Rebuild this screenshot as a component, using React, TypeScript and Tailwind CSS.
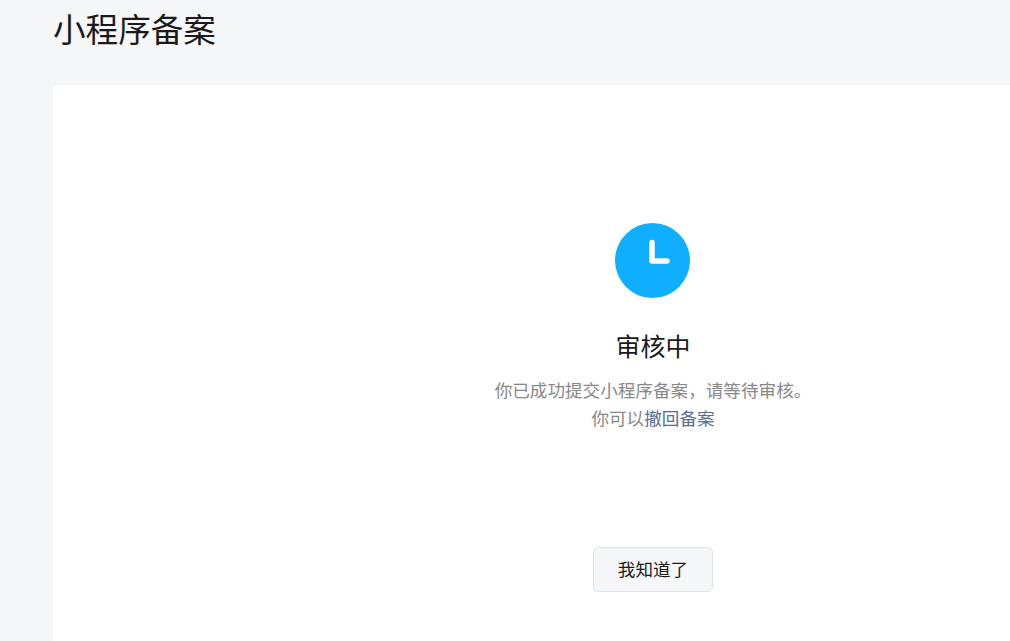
export default function App() {
  return (
    <div
      className="h-[641px] w-[1010px] overflow-hidden bg-[#f6f7f9] pl-[53px]"
      style={{ fontFamily: '"Liberation Sans", "Noto Sans CJK SC", sans-serif' }}
    >
      <h1 className="h-[85px] pt-[9px] text-[32.6px] leading-[44px] font-normal text-[#1a1a1a]">小程序备案</h1>
      <div className="flex h-[600px] w-[1200px] flex-col items-center rounded-t bg-white pt-[138px]">
        <svg className="-ml-px" width="75" height="75" viewBox="0 0 75 75">
          <circle cx="37.5" cy="37.5" r="37.5" fill="#10aeff" />
          <path d="M37 19.5V38H52" fill="none" stroke="white" strokeWidth="5.5" strokeLinecap="round" strokeLinejoin="round" />
        </svg>
        <h2 className="mt-[32px] text-[25px] leading-[34px] font-normal text-[#1a1a1a]">审核中</h2>
        <p className="mt-[13px] text-[17.6px] leading-[28px] text-[#888]">你已成功提交小程序备案，请等待审核。</p>
        <p className="text-[17.6px] leading-[28px] text-[#888]">
          你可以<a className="text-[#576b95]">撤回备案</a>
        </p>
        <button className="mt-[114px] h-[45px] w-[120px] rounded-[5px] border border-[#e2e3e6] bg-[#f6f7f9] pt-px text-[17.6px] text-[#1a1a1a]">我知道了</button>
      </div>
    </div>
  );
}
